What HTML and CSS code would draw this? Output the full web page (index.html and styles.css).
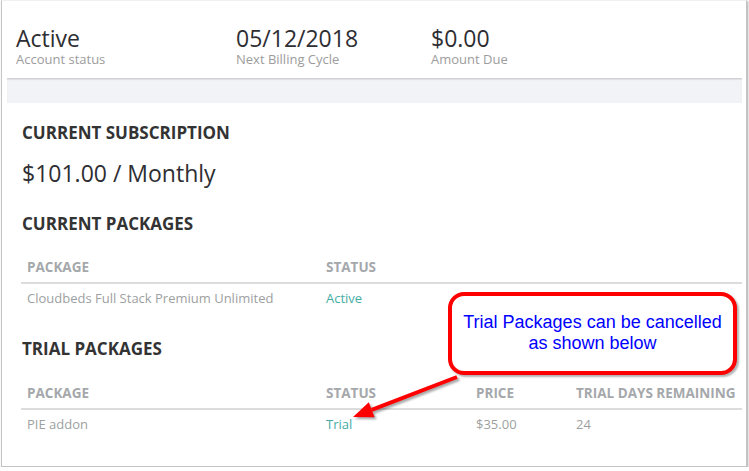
FILE: index.html
```html
<!DOCTYPE html>
<html>
<head>
<meta charset="utf-8">
<link rel="stylesheet" href="styles.css">
</head>
<body>
<div class="frame">
  <div class="panel">
    <div class="summary">
      <div class="stat stat-1">
        <div class="stat-value">Active</div>
        <div class="stat-label">Account status</div>
      </div>
      <div class="stat stat-2">
        <div class="stat-value">05/12/2018</div>
        <div class="stat-label">Next Billing Cycle</div>
      </div>
      <div class="stat">
        <div class="stat-value">$0.00</div>
        <div class="stat-label">Amount Due</div>
      </div>
    </div>
    <div class="band"></div>
    <div class="content">
      <h2 class="heading">CURRENT SUBSCRIPTION</h2>
      <div class="price">$101.00 / Monthly</div>
      <h2 class="heading heading-packages">CURRENT PACKAGES</h2>
      <div class="table table-current">
        <div class="th">PACKAGE</div>
        <div class="th">STATUS</div>
        <div class="th"></div>
        <div class="th"></div>
        <div class="td">Cloudbeds Full Stack Premium Unlimited</div>
        <div class="td status">Active</div>
        <div class="td"></div>
        <div class="td"></div>
      </div>
      <h2 class="heading heading-trial">TRIAL PACKAGES</h2>
      <div class="table table-trial">
        <div class="th">PACKAGE</div>
        <div class="th">STATUS</div>
        <div class="th">PRICE</div>
        <div class="th">TRIAL DAYS REMAINING</div>
        <div class="td">PIE addon</div>
        <div class="td status">Trial</div>
        <div class="td">$35.00</div>
        <div class="td">24</div>
      </div>
    </div>
  </div>

  <svg class="arrow" width="130" height="70" viewBox="0 0 130 70">
    <line x1="115" y1="17" x2="29.7" y2="49.8" stroke="#ff0000" stroke-width="4"/>
    <polygon points="11,57 32.6,57.3 26.8,42.3" fill="#ff0000"/>
  </svg>
  <div class="callout">Trial Packages can be cancelled<br>as shown below</div>
</div>
</body>
</html>
```

FILE: styles.css
```css
html, body {
  margin: 0;
  padding: 0;
  background: #ffffff;
}

body {
  font-family: "Open Sans", "DejaVu Sans", sans-serif;
  color: #333333;
}

.frame {
  position: relative;
  box-sizing: border-box;
  width: 746px;
  height: 467px;
  margin-left: 1px;
  border: 1px solid #c4c4c4;
  border-top: 1px solid #f0f0f0;
  box-shadow: 1px 1px 2px rgba(0, 0, 0, 0.35);
  background: #ffffff;
}

.panel {
  margin: -1px 4px 0 5px;
}

.summary {
  display: flex;
  padding: 24px 0 0 9px;
  height: 54px;
  border-bottom: 1px solid #d2d2d4;
}

.stat-1 { width: 220px; }
.stat-2 { width: 195px; }

.stat-value {
  font-size: 23px;
  line-height: 29px;
  color: #2e2e33;
}

.stat-label {
  font-size: 13px;
  line-height: 13px;
  color: #9c9c9c;
}

.band {
  height: 24px;
  background: #f2f3f7;
  box-shadow: inset 0 1px 1px rgba(0, 0, 0, 0.08);
}

.content {
  padding: 0 0 0 14px;
}

.heading {
  margin: 20px 0 0 1px;
  font-size: 17px;
  line-height: 20px;
  font-weight: 700;
  color: #333333;
}

.price {
  margin: 16px 0 0 1px;
  font-size: 23px;
  line-height: 28px;
  color: #2e2e33;
}

.heading-packages { margin-top: 27px; }
.heading-trial { margin-top: 32px; }

.table {
  display: grid;
  grid-template-columns: 299px 150px 100px 1fr;
  margin-top: 24px;
}

.table-trial { margin-top: 25px; }

.th {
  padding: 0 6px 6px;
  font-size: 13.5px;
  line-height: 18px;
  font-weight: 700;
  color: #a5a8ab;
  border-bottom: 2px solid #dcdcdc;
  white-space: nowrap;
}

.td {
  padding: 5px 6px 0;
  font-size: 13px;
  line-height: 18px;
  color: #9d9fa1;
  white-space: nowrap;
}

.td.status {
  color: #45ada5;
}

.arrow {
  position: absolute;
  left: 340px;
  top: 359px;
  filter: drop-shadow(2px 2px 1px rgba(0, 0, 0, 0.35));
}

.callout {
  position: absolute;
  left: 446px;
  top: 291px;
  box-sizing: border-box;
  width: 289px;
  height: 83px;
  padding-top: 16px;
  border: 4px solid #ff0000;
  border-radius: 16px;
  background: #ffffff;
  box-shadow: 2px 2px 2px rgba(0, 0, 0, 0.3);
  font-family: "Liberation Sans", Arial, sans-serif;
  font-size: 18px;
  line-height: 21px;
  color: #0000ff;
  text-align: center;
}
```
